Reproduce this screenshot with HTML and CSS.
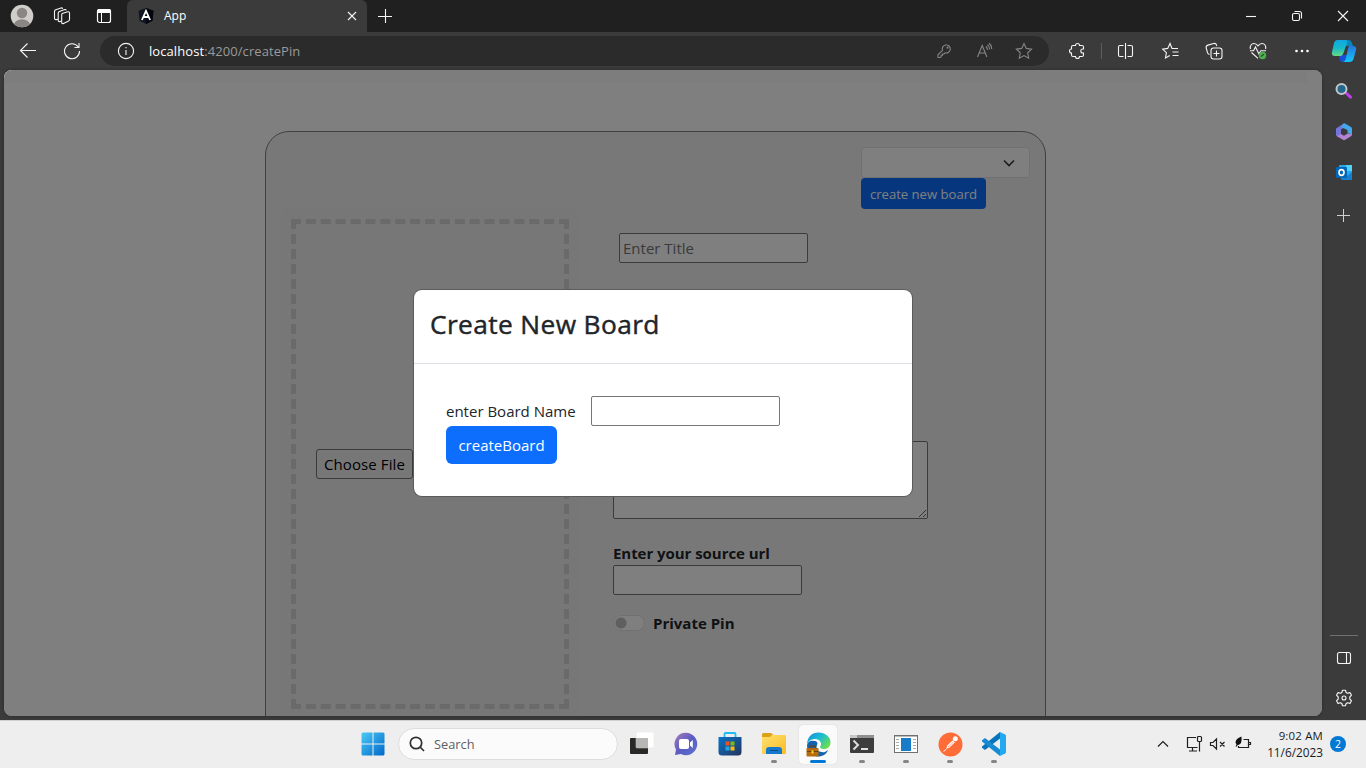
FILE: index.html
```html
<!DOCTYPE html>
<html lang="en">
<head>
<meta charset="utf-8">
<title>App</title>
<link rel="stylesheet" href="styles.css">
</head>
<body>
<header class="titlebar">
  <div class="cell w40 lead"><svg width="24" height="24" viewBox="0 0 24 24"><defs><clipPath id="av"><circle cx="12" cy="12" r="11.2"/></clipPath></defs><circle cx="12" cy="12" r="11.3" fill="#d0cecb"/><g clip-path="url(#av)" fill="#8a8683"><circle cx="12" cy="9" r="5.2"/><ellipse cx="12" cy="21" rx="8" ry="5.7"/></g></svg></div>
  <div class="cell w40"><svg class="line" width="18" height="18" viewBox="0 0 18 18"><path d="M9.2 6.5l5.6-1.7c1-.3 1.7.2 1.7 1.2v6.300c0 1-.4 1.600-1.300 2l-4.700 2.200c-1 .4-1.800 0-1.800-1V7.900c0-.7.200-1.200.5-1.400z"/><path d="M8 14.300l-1.300.3c-.9.200-1.500-.3-1.500-1.200V6.100c0-.8.400-1.400 1.200-1.700l5.300-1.800c.8-.2 1.400 0 1.600.8"/><path d="M5 12.200l-2 .4c-.9.100-1.500-.4-1.500-1.300V4.500c0-.8.400-1.400 1.200-1.700L8 1c.8-.2 1.400 0 1.700.8"/></svg></div>
  <div class="cell w44"><svg width="16" height="16" viewBox="0 0 16 16"><rect x="1.500" y="1.500" width="13" height="13" rx="2" fill="none" stroke="#fff" stroke-width="1.200"/><path d="M1 5V3a2 2 0 0 1 2-2h10a2 2 0 0 1 2 2v2z" fill="#fff"/><path d="M5.500 5v9" stroke="#fff"/></svg></div>
  <div class="tab">
    <svg width="16" height="16" viewBox="0 0 16 16"><path d="M8 0l7.500 2.700-1 10L8 16l-6.500-3.300-1-10z" fill="#111722"/><path d="M8 0l7.500 2.700-1 10L8 16z" fill="#03060d"/><path d="M3.900 12L8 2.900 12.100 12M5.600 9h4.800" fill="none" stroke="#fff" stroke-width="1.800"/></svg>
    <span class="tab-name">App</span>
    <svg class="line" width="10" height="10" viewBox="0 0 10 10"><path d="M1 1l8 8M9 1L1 9"/></svg>
  </div>
  <div class="cell plus"><svg class="line" width="16" height="16" viewBox="0 0 16 16"><path d="M8.500 1v14M1 8.500h14"/></svg></div>
  <div class="window-buttons">
    <div class="cell"><svg class="line" width="12" height="12" viewBox="0 0 12 12"><path d="M1 6.500h10"/></svg></div>
    <div class="cell"><svg class="line" width="12" height="12" viewBox="0 0 12 12"><rect x="1.500" y="3.500" width="7" height="7" rx="1.500"/><path d="M3.500 1.500h5a2 2 0 0 1 2 2v5"/></svg></div>
    <div class="cell"><svg class="line" width="12" height="12" viewBox="0 0 12 12"><path d="M1 1l10 10M11 1L1 11"/></svg></div>
  </div>
</header>
<nav class="toolbar">
  <div class="cell w44 back"><svg class="line" width="18" height="18" viewBox="0 0 18 18"><path d="M17 8.500H1.500M8.500 1.500l-7 7 7 7"/></svg></div>
  <div class="cell w44"><svg class="line" width="18" height="18" viewBox="0 0 18 18"><path d="M15.200 5A7.500 7.500 0 1 0 16.500 9M16 1v4.500h-4.500"/></svg></div>
  <div class="address">
    <svg class="line" width="18" height="18" viewBox="0 0 18 18"><circle cx="9" cy="9" r="7.600"/><path d="M9 8v5M9 5v1.300"/></svg>
    <span class="url"><b>localhost</b>:4200/createPin</span>
    <div class="cell w40 dim"><svg class="line" width="16" height="16" viewBox="0 0 16 16"><path d="M6.500 7.300a4 4 0 1 1 2.700 2.500L8 11H6.500v1.300H5.200v1.400l-.9.800H2v-2.700z"/><circle cx="11.500" cy="4.700" r=".5"/></svg></div>
    <div class="cell w40 dim"><svg class="line" width="18" height="18" viewBox="0 0 18 18"><path d="M2.500 15L7.200 3.500l4.700 11.500M4.200 11h6M11 4.500c1 1 1.500 2 1.500 3.500M12.500 2.800c1.300 1 2.200 2.700 2.200 4.700M14 1.200c1.800 1.300 2.700 3.500 2.700 5.800"/></svg></div>
    <div class="cell w40 dim"><svg class="line" width="18" height="18" viewBox="0 0 18 18"><path d="M9 1.500l2.300 4.900 5.300.7-3.900 3.700 1 5.400L9 13.600l-4.700 2.600 1-5.400L1.400 7.100l5.300-.7z"/></svg></div>
  </div>
  <div class="cell w44 ext"><svg class="line" width="18" height="18" viewBox="0 0 18 18"><path d="M5 3.500h2.500a2 2 0 0 1 4 0H14q1.500 0 1.500 1.500v2h-.7a2 2 0 0 0 0 4h.7v2q0 1.500-1.500 1.500h-2.500a2 2 0 0 1-4 0H5q-1.500 0-1.500-1.500V11a2 2 0 0 1 0-4V5q0-1.500 1.500-1.500z"/></svg></div>
  <i class="divider"></i>
  <div class="cell w44"><svg class="line" width="18" height="18" viewBox="0 0 18 18"><path d="M6.500 3.500H3a1.500 1.500 0 0 0-1.500 1.500v8A1.500 1.500 0 0 0 3 14.500h3.500M10.500 3.500H14a1.500 1.500 0 0 1 1.500 1.500v8a1.500 1.500 0 0 1-1.500 1.500h-3.500M8.500 1v16"/></svg></div>
  <div class="cell w44"><svg class="line" width="18" height="18" viewBox="0 0 18 18"><path d="M17 6.500H11L9 1.500 6.700 6.400l-5 .7 3.700 3.600-.9 5.200 4.300-2.300M11.500 10h6M11.500 13.500h6"/></svg></div>
  <div class="cell w44"><svg class="line" width="18" height="18" viewBox="0 0 18 18"><rect x="6" y="6" width="11" height="11" rx="2.500"/><path d="M11.500 8.500v6M8.500 11.500h6M4.500 12.500a2.500 2.500 0 0 1-2-1.800L1.200 6A2.500 2.500 0 0 1 3 3.100L8.600 1.500a2.500 2.500 0 0 1 3 1.800l.2.700"/></svg></div>
  <div class="cell w44"><svg class="line" width="18" height="18" viewBox="0 0 18 18"><path d="M1.400 7C.6 3.700 2.600 1.500 5 1.500c1.700 0 3 1 4 2.300 1-1.300 2.300-2.300 4-2.300 2.400 0 4.400 2.200 3.600 5.500M2.500 10.500L9 16.300M1 8.700h3.500L6.500 5l3.300 6.700 2.100-3H17"/><circle cx="13.500" cy="13.500" r="3.700" fill="#4caf50" stroke="none"/><path d="M11.900 14.500l3-2.300" stroke="#244d26"/></svg></div>
  <div class="cell w44"><svg width="16" height="4" viewBox="0 0 16 4" fill="#fff"><circle cx="2.500" cy="2" r="1.300"/><circle cx="8" cy="2" r="1.300"/><circle cx="13.500" cy="2" r="1.300"/></svg></div>
  <div class="cell w40"><svg width="26" height="24" viewBox="0 0 26 24"><defs><linearGradient id="cp1" x1="0" y1="0" x2="0" y2="1"><stop offset="0" stop-color="#11a7e2"/><stop offset=".5" stop-color="#15b9c9"/><stop offset="1" stop-color="#68db83"/></linearGradient><linearGradient id="cp2" x1="0" y1="0" x2="0" y2="1"><stop offset="0" stop-color="#2876dc"/><stop offset="1" stop-color="#12c6fa"/></linearGradient></defs><path d="M8 16h9l-2 5q-1 2-3 2-3 0-3.500-3z" fill="#1750d7"/><path d="M12 1h6q2 0 3 3l1 3h-8z" fill="#0886bc"/><path d="M6 1h8q3 0 2 3l-3.500 10q-1 3-3.500 3H4q-4 0-3-4L3 4q1-3 3-3z" fill="url(#cp1)"/><path d="M18 7h4q4 0 3 4l-2.500 9q-1 3-4 3H11q3 0 3.700-3L17 10q.4-2 1-3z" fill="url(#cp2)"/></svg></div>
</nav>
<main class="main">
  <section class="page">
    <div class="navstrip"></div>
    <div class="pin-card">
      <div class="board-pick">
        <div class="select"><svg width="12" height="8" viewBox="0 0 12 8"><path d="M1 1.500l5 5 5-5" fill="none" stroke="#343a40" stroke-width="1.600"/></svg></div>
        <button class="btn small"><span>create new board</span></button>
      </div>
      <div class="columns">
        <div class="upload"><div class="dropzone"><button class="choose"><span>Choose File</span></button></div></div>
        <div class="fields">
          <input class="field title" placeholder="Enter Title">
          <textarea class="area"></textarea>
          <strong class="label source">Enter your source url</strong>
          <input class="field">
          <div class="switch-row"><i class="switch"></i><strong class="label private">Private Pin</strong></div>
        </div>
      </div>
    </div>
    <div class="backdrop">
      <div class="modal">
        <div class="modal-head"><h3>Create New Board</h3></div>
        <div class="modal-body">
          <div class="row"><span class="caption">enter Board Name</span><input class="field"></div>
          <button class="btn"><span>createBoard</span></button>
        </div>
      </div>
    </div>
  </section>
  <aside class="sidebar">
    <div class="side-item"><svg width="18" height="18" viewBox="0 0 18 18"><path d="M11 11l4.500 4.200" stroke="#c33cea" stroke-width="3" stroke-linecap="round"/><circle cx="6.500" cy="7" r="5" fill="#24678a" stroke="#c3c6c8" stroke-width="2"/></svg></div>
    <div class="side-item s2"><svg width="18" height="18" viewBox="0 0 18 18"><path d="M1 5.500L8 1l3 2.500-5 3V13l-3 1-2-1.500z" fill="#7475dc"/><path d="M8 .7q1.200-.7 2.500 0l5.500 3.300q1 .6 1 1.800V12l-4.500-2.500V7L6 4z" fill="#43a7ec"/><path d="M17 11.500q0 1.200-1 1.800l-5.700 3.500q-1.200.7-2.500 0L2 13.300l4-2.300 3 1.800 4-2.500z" fill="#b283d1"/></svg></div>
    <div class="side-item s3"><svg width="17" height="17" viewBox="0 0 17 17"><rect x="3" y="1" width="13" height="13" rx="1" fill="#28a8ea"/><path d="M10 1h6v6h-6z" fill="#50d2fa"/><path d="M5 8l6 4 5-4v8H6q-1 0-1-1z" fill="#1580d0"/><rect y="3" width="11" height="11" rx="1" fill="#0067b8"/><ellipse cx="5.500" cy="8.500" rx="2.500" ry="2.900" fill="none" stroke="#fff" stroke-width="1.600"/></svg></div>
    <div class="side-item s4"><svg width="13" height="13" viewBox="0 0 13 13" stroke="#d0d0d0"><path d="M6.500 0v13M0 6.500h13"/></svg></div>
    <i class="side-rule"></i>
    <div class="side-item"><svg class="line" width="16" height="14" viewBox="0 0 16 14"><rect x="1.500" y="1.500" width="13" height="11" rx="2"/><path d="M10.500 1.500v11"/></svg></div>
    <div class="side-item"><svg class="line" width="18" height="18" viewBox="0 0 18 18"><path d="M7.500 1.200h3l.6 2.300 1.400.8 2.500-.7 1.500 2.600L14.800 8v2l1.700 1.800-1.500 2.600-2.500-.7-1.400.8-.6 2.300h-3l-.6-2.300-1.400-.8-2.500.7-1.500-2.600L3.200 10V8L1.500 6.200 3 3.600l2.500.7 1.400-.8z" stroke-linejoin="round"/><circle cx="9" cy="9" r="2"/></svg></div>
  </aside>
</main>
<footer class="taskbar">
  <div class="apps">
    <div class="app start"><svg width="24" height="24" viewBox="0 0 24 24"><defs><linearGradient id="wn" x1="0" y1="0" x2="1" y2="1"><stop stop-color="#4bcaf6"/><stop offset="1" stop-color="#0067c9"/></linearGradient></defs><path d="M1.500.5H11.500V11.500H.5v-10zM12.500.5h10l1 1v10h-11zM.5 12.500h11v11h-10l-1-1zM12.500 12.500h11v10l-1 1h-10z" fill="url(#wn)"/></svg></div>
    <div class="search"><svg width="16" height="16" viewBox="0 0 16 16" fill="none" stroke="#303030" stroke-width="1.700"><circle cx="7" cy="7" r="5.700"/><path d="M11 11l4 4"/></svg><span>Search</span></div>
    <div class="app"><svg width="24" height="24" viewBox="0 0 24 24"><rect y="6" width="18" height="16" rx="1" fill="#292927"/><rect x="6" width="18" height="16" rx="1" fill="#fff" stroke="#ddd" stroke-width=".5"/><path d="M6 6h12v10H6z" fill="#b7b8b5"/></svg></div>
    <div class="app"><svg width="24" height="24" viewBox="0 0 24 24"><defs><linearGradient id="ct" x1="0" y1="0" x2="1" y2="1"><stop stop-color="#aa7ab8"/><stop offset=".5" stop-color="#5c5cc4"/><stop offset="1" stop-color="#5c72cf"/></linearGradient></defs><path d="M12 .8A11.200 11.200 0 1 1 7 22L1 23l1-5.500A11.200 11.200 0 0 1 12 .8z" fill="url(#ct)"/><rect x="5" y="7" width="10" height="10" rx="2" fill="#fff"/><path d="M16 10.500L18.800 8v8L16 13.500z" fill="#fff"/></svg></div>
    <div class="app"><svg width="24" height="24" viewBox="0 0 24 24"><defs><linearGradient id="st" x1="0" y1="0" x2="1" y2="1"><stop stop-color="#0875c9"/><stop offset="1" stop-color="#25345c"/></linearGradient></defs><path d="M6.500 6V2q0-1 1-1h9q1 0 1 1v4" fill="none" stroke="#20bdf0" stroke-width="1.800"/><path d="M.5 5h23v15q0 3.500-3.500 3.500H4q-3.500 0-3.500-3.500z" fill="url(#st)"/><path d="M7.500 9.500h4v4h-4z" fill="#ee5222"/><path d="M12.500 9.500h4v4h-4z" fill="#80b90f"/><path d="M7.500 14.500h4v4h-4z" fill="#20a6ed"/><path d="M12.500 14.500h4v4h-4z" fill="#ffba08"/></svg></div>
    <div class="app running"><svg width="24" height="24" viewBox="0 0 24 24"><path d="M1 1h8l2.500 2H23v8H0V2z" fill="#dda117"/><defs><linearGradient id="fl" x1="0" y1="0" x2="1" y2="1"><stop stop-color="#ffe071"/><stop offset="1" stop-color="#f9bc24"/></linearGradient></defs><path d="M0 5h8l2-2h13l1 1v17q0 1-1 1H1q-1 0-1-1z" fill="url(#fl)"/><path d="M4 22v-4q0-3 3-3h10q3 0 3 3v4z" fill="#1479cc"/><path d="M8 18.500h8" stroke="#0a4c88"/></svg></div>
    <div class="app running active"><svg width="25" height="25" viewBox="0 0 25 25"><defs><linearGradient id="ed" x1="0" y1="0" x2="1" y2=".7"><stop stop-color="#1688dd"/><stop offset=".5" stop-color="#1abdd2"/><stop offset="1" stop-color="#6ede4c"/></linearGradient></defs><path d="M1 13C1 5 6 .5 12.500.5S25 5 24.500 11c-.4 4-3 6-7 6-3 0-4-1.500-3-3 2-3-1-7-5-7C5 7 2 9 1 13z" fill="url(#ed)"/><path d="M1 13c1-4 4-5 7-4 3 0 4 2 3 4-2 5 3 8 8 7l3-2c-1 4-6 7-11 6.500C5 24 1 19 1 13z" fill="#1463ad"/><rect x=".5" y="16" width="12" height="8.500" rx=".8" fill="#b56b0b"/><path d="M4 16v-2h5v2M1 19.500h11" fill="none" stroke="#704006"/><path d="M5.500 18.500h2v3h-2z" fill="#ffd43b"/></svg></div>
    <div class="app running"><svg width="24" height="20" viewBox="0 0 24 20"><rect y="1" width="24" height="18" rx="1" fill="#3d3d3d"/><path d="M0 4V2q0-1 1-1h6v3z" fill="#c8c8c8"/><path d="M7 1h16q1 0 1 1v2H7z" fill="#909090"/><path d="M3.500 6.500L8 11l-4.500 4.500" fill="none" stroke="#ddd" stroke-width="2"/><path d="M11 15h7" stroke="#fff" stroke-width="1.700"/></svg></div>
    <div class="app running"><svg width="24" height="20" viewBox="0 0 24 20"><rect x=".5" y="1.500" width="23" height="17" fill="#fff" stroke="#707070"/><path d="M1 2.500h22" stroke="#bbb"/><rect x="7" y="4" width="10" height="13" fill="#187cc9"/><path d="M2 5.500h3M2 8.500h3M2 11.500h3M2 14.500h3M19 5.500h3M19 8.500h3M19 11.500h3M19 14.500h3" stroke="#aaa"/></svg></div>
    <div class="app running"><svg width="25" height="25" viewBox="0 0 25 25"><circle cx="12.500" cy="12.500" r="12" fill="#ff6c37"/><circle cx="17.300" cy="6.800" r="2.500" fill="#fff"/><path d="M14.500 8.500l2.500 1.700-5.500 5.300-3.200 1.200 1-3.200z" fill="#fff"/><path d="M8.500 17l-3 2.500" stroke="#fff"/><path d="M10 15l5-4.500" stroke="#ff6c37" stroke-width=".6"/></svg></div>
    <div class="app running"><svg width="24" height="24" viewBox="0 0 24 24"><path d="M18 0l5.200 2.500q.8.400.8 1.300v16.400q0 .9-.8 1.300L18 24z" fill="#23a8f2"/><path d="M18 0v6.500L3 18l-3-2.200v-1.300z" fill="#0874b9"/><path d="M18 24v-6.500L3 6 0 8.200v1.300z" fill="#168bd2"/></svg></div>
  </div>
  <div class="tray">
    <svg class="chev" width="12" height="8" viewBox="0 0 12 8"><path d="M1 6.500l5-5 5 5"/></svg>
    <svg class="net" width="18" height="18" viewBox="0 0 18 18"><path d="M11 2.500H2.500v10h10M7.500 12.500v3M4 16h8"/><rect x="12.500" y="1.500" width="4" height="5" rx="1"/><path d="M14.500 6.500v10"/></svg>
    <svg class="vol" width="18" height="14" viewBox="0 0 18 14"><path d="M1.500 5.500v3H4l3.500 3.500V2L4 5.500zM11 5l4.500 4.500M15.500 5L11 9.500"/></svg>
    <svg class="bat" width="18" height="16" viewBox="0 0 18 16"><path d="M9.500 3.500h5v8h-10V10M15 6.500h1.500v2H15"/><path d="M1.500 6.500Q1.500 2.500 7.500.5q.8 8-3.500 8.500Q2 9 1.500 6.500z" fill="#111" stroke="none"/><path d="M2 10.500l4-6" stroke="#111"/></svg>
    <div class="clock"><span class="time">9:02 AM</span><span class="date">11/6/2023</span></div>
    <b class="badge">2</b>
  </div>
</footer>
</body>
</html>
```
FILE: styles.css
```css
* { box-sizing: border-box; }
body {
  margin: 0; width: 1366px; height: 768px; overflow: hidden;
  display: flex; flex-direction: column; background: #3b3b3b;
  font-family: "Open Sans", "Noto Sans", sans-serif; color: #212529;
}
svg { flex: none; display: block; }
.line { fill: none; stroke: #f5f5f5; stroke-width: 1.1; }
.cell { display: flex; align-items: center; justify-content: center; flex: none; }
.w40 { width: 40px; }
.w44 { width: 44px; }

.titlebar { height: 32px; background: #202020; display: flex; flex: none; }
.titlebar .lead { margin-left: 2px; }
.tab {
  width: 240px; margin-left: 1px; padding: 0 10px 0 11px; display: flex; align-items: center;
  background: #3b3b3b; border-radius: 6px 6px 0 0; color: #fff;
}
.tab-name { font-size: 12px; margin: -2px 0 0 10px; flex: 1; }
.plus { width: 35px; }
.window-buttons { margin-left: auto; display: flex; }
.window-buttons .cell { width: 46px; }

.toolbar { height: 38px; flex: none; display: flex; align-items: center; }
.back { margin-left: 6px; }
.address {
  width: 949px; height: 30px; margin-left: 6px; padding: 0 5px 0 17px;
  display: flex; align-items: center; background: #2b2b2b; border-radius: 15px;
}
.url { flex: 1; margin-left: 14px; font-size: 13px; letter-spacing: .08px; color: #9a9a9a; }
.url b { font-weight: 400; color: #fff; }
.dim .line { stroke: #858585; }
.ext { margin-left: 6px; }
.divider { width: 1px; height: 16px; background: #5d5d5d; margin: 0 2px; }

.main { flex: 1; display: flex; min-height: 0; }
.page {
  position: relative; width: 1318px; height: 646px; margin-left: 4px;
  background: #fff; border-radius: 8px; overflow: hidden; box-shadow: 0 0 3px #282828;
}
.navstrip { height: 13px; width: 1303px; background: #fbfbfb; }
.pin-card {
  width: 781px; height: 700px; margin: 48px 0 0 261px; padding: 15px 15px 0 15px;
  border: 1px solid #808080; border-radius: 24px; background: #f1f1f1;
}
.board-pick { width: 169px; margin-left: auto; }
.select {
  height: 31px; padding-right: 14px; display: flex; align-items: center; justify-content: flex-end;
  border: 1px solid #dee2e6; border-radius: 4px; background: #fff;
}
.btn {
  height: 38px; width: 111px; padding: 0; display: flex; align-items: center; justify-content: center;
  border: 0; border-radius: 6px; background: #0d6efd; color: #fff;
  font: 15px "Open Sans", sans-serif; white-space: nowrap;
}
.btn.small { width: 125px; height: 31px; border-radius: 4px; font-size: 13.1px; }
.columns { display: flex; }
.upload { width: 297px; height: 510px; padding: 10px; background: #eee; border-radius: 6px; }
.dropzone { width: 278px; height: 490px; border: 5px dashed #d4d4d4; padding: 225px 0 0 20px; }
.choose {
  width: 97px; height: 30px; padding: 0; border: 1px solid #767676; border-radius: 3px;
  background: #efefef; color: #000; font: 15px "Open Sans", sans-serif; letter-spacing: .1px; white-space: nowrap;
}
.fields { padding: 24px 0 0 35px; display: flex; flex-direction: column; align-items: flex-start; }
.field {
  width: 189px; height: 30px; padding: 1px 3px; border: 1px solid #767676; border-radius: 2px;
  background: #fff; font: 15px "Open Sans", sans-serif; outline: 0;
}
.field::placeholder { color: #757575; }
.title { margin-left: 6px; }
.area { width: 315px; height: 78px; margin: 178px 0 22px; border: 1px solid #767676; border-radius: 2px; background: #fff; }
.label { font-size: 15px; line-height: 24px; font-weight: 700; white-space: nowrap; }
.source { letter-spacing: -.05px; }
.switch-row { display: flex; align-items: center; gap: 8px; margin-top: 16px; }
.switch {
  width: 32px; height: 16px; border: 1px solid #dee2e6; border-radius: 8px;
  background: radial-gradient(circle at 7px 7px, #bfbfbf 5px, #fff 6px);
}
.backdrop { position: absolute; inset: 0; background: rgba(0, 0, 0, .5); padding: 220px 0 0 410px; }
.modal { width: 498px; height: 206px; background: #fff; border-radius: 8px; box-shadow: 0 0 0 1px #5b5b5b; }
.modal-head { height: 74px; padding: 16px; border-bottom: 1px solid #dee2e6; }
.modal-head h3 {
  margin: 0; font-size: 26.3px; line-height: 36px; font-weight: 500; letter-spacing: .38px;
  -webkit-text-stroke: .45px #212529; white-space: nowrap;
}
.modal-body { padding: 32px; }
.row { display: flex; align-items: center; }
.caption { width: 145px; font-size: 15px; white-space: nowrap; }

.sidebar { width: 44px; display: flex; flex-direction: column; align-items: center; padding-top: 1px; }
.side-item { height: 40px; display: flex; align-items: center; justify-content: center; }
.s2 { padding-top: 1px; }
.s3 { height: 42px; }
.s4 { height: 44px; margin-left: -1px; }
.side-rule { width: 28px; height: 1px; background: #707070; margin: auto 0 2px; }
.sidebar .side-item:last-child { margin-bottom: 2px; }

.taskbar { height: 48px; flex: none; background: #eee; border-top: 1px solid #d0d0d0; display: flex; padding: 0 0 1px 351px; }
.apps { display: flex; align-items: center; }
.app { width: 44px; height: 44px; display: flex; align-items: center; justify-content: center; position: relative; }
.running::after {
  content: ""; position: absolute; left: 19px; bottom: 3px; width: 6px; height: 3px;
  border-radius: 2px; background: #858585;
}
.active::before { content: ""; position: absolute; inset: 3px 3px 2px; background: #fafafa; border-radius: 4px; box-shadow: 0 0 1px #bbb; }
.active svg { position: relative; }
.active::after { left: 14px; width: 16px; background: #0078d4; }
.search {
  width: 220px; height: 32px; margin: 0 2px 0 3px; padding-left: 10px; gap: 9px;
  display: flex; align-items: center; border: 1px solid #ddd; border-radius: 16px; background: #fbfbfb;
  font-size: 12.8px; color: #606060;
}
.tray { margin-left: auto; padding-right: 20px; display: flex; align-items: center; }
.tray svg { fill: none; stroke: #202020; stroke-width: 1.2; }
.chev { margin-right: 16px; }
.net { margin-right: 6px; }
.vol { margin-right: 7px; }
.clock { width: 71px; display: flex; flex-direction: column; align-items: flex-end; font-size: 11.8px; line-height: 16px; color: #1b1b1b; }
.time { font-size: 11.4px; letter-spacing: .2px; }
.badge {
  width: 16px; height: 16px; margin-left: 7px; border-radius: 50%; background: #0078d4; color: #fff;
  font-size: 10.5px; line-height: 16px; text-align: center; font-weight: 400;
}
```
